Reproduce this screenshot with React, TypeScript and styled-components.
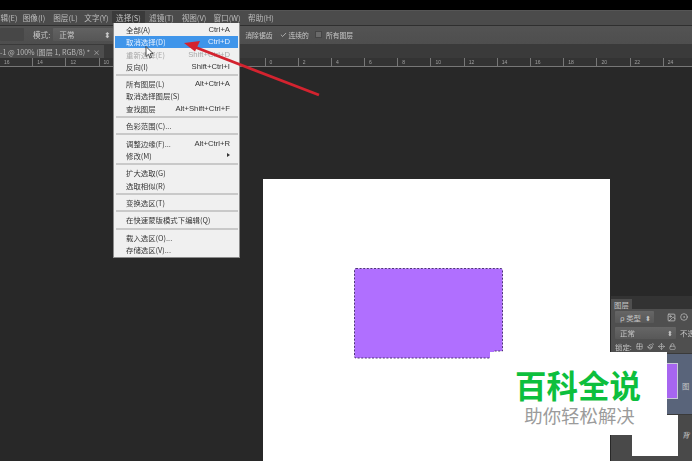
import React from "react";
import styled, { createGlobalStyle } from "styled-components";
import { Check, Grid2x2, Paintbrush, Move, Lock, Image as ImageIcon, CircleDot } from "lucide-react";

const Global = createGlobalStyle`
  html, body { margin: 0; padding: 0; background: #282828; }
  * { box-sizing: border-box; }
`;

const FONT = `"Noto Sans CJK SC", "Liberation Sans", sans-serif`;

const Shell = styled.div`
  position: relative;
  width: 692px;
  height: 461px;
  overflow: hidden;
  background: #282828;
  font-family: ${FONT};
  display: flex;
  flex-direction: column;
`;
const TopBlack = styled.div`height: 10px; background: #000; flex: none;`;
const MenuBar = styled.div`
  height: 16px; flex: none; display: flex; align-items: center; padding-bottom: 2px;
  background: #4b4b4b; border-bottom: 1px solid #2f2f2f; border-top: 1px solid #555;
  font-size: 7.6px; color: #bdbdbd; filter: blur(0.35px); white-space: nowrap;
`;
const MenuTitle = styled.span<{ $w: number; $active?: boolean }>`
  flex: none; width: ${(p) => p.$w}px; height: 100%; display: flex; align-items: center; justify-content: center;
  background: ${(p) => (p.$active ? "#3a3a3a" : "transparent")};
`;
const OptionsBar = styled.div`
  height: 19px; flex: none; display: flex; align-items: center; padding-bottom: 1px;
  background: linear-gradient(#535353, #4e4e4e); border-bottom: 1px solid #3a3a3a;
  font-size: 7.6px; color: #c8c8c8; filter: blur(0.35px); white-space: nowrap;
`;
const OptBox = styled.div<{ $w: number; $light?: boolean }>`
  flex: none; width: ${(p) => p.$w}px; height: 13px; display: flex; align-items: center; justify-content: space-between;
  padding: 0 2px 0 6px; background: ${(p) => (p.$light ? "linear-gradient(#626262,#565656)" : "#474747")};
  border-radius: 1px; margin-left: ${(p) => (p.$light ? 3 : 0)}px;
`;
const OptLabel = styled.span<{ $ml: number; $small?: boolean }>`
  flex: none; margin-left: ${(p) => p.$ml}px; font-size: ${(p) => (p.$small ? 6.8 : 7.6)}px;
`;
const CheckMark = styled.span<{ $ml: number; $on?: boolean }>`
  flex: none; margin-left: ${(p) => p.$ml}px; width: 7px; height: 7px; display: inline-flex; align-items: center; justify-content: center;
  background: ${(p) => (p.$on ? "transparent" : "#6a6a6a")}; border: ${(p) => (p.$on ? "0" : "1px solid #444")}; color: #eee;
`;
const TabBar = styled.div`height: 13px; flex: none; background: #3a3a3a; display: flex; filter: blur(0.35px);`;
const Tab = styled.div`
  width: 104px; height: 100%; background: #4d4d4d; color: #b8b8b8; font-size: 7.1px; white-space: nowrap;
  display: flex; align-items: center; justify-content: space-between; padding: 0 4px 0 0; overflow: hidden;
`;
const Ruler = styled.div`
  height: 9px; flex: none; display: flex; margin-left: -1px; background: #333; 
  box-shadow: inset 0 -1px 0 #777; color: #a0a0a0; font-size: 5px; filter: blur(0.3px);
  font-family: "Liberation Sans", sans-serif;
`;
const RulerCell = styled.div`
  flex: none; width: 33.2px; height: 100%; border-left: 1px solid #777; padding: 1px 0 0 4px; line-height: 7px;
`;
const Workspace = styled.div`
  position: relative; flex: 1; min-height: 0; background: #282828; padding: 112px 0 0 263px; overflow: hidden;
`;
const Doc = styled.div`position: relative; width: 347px; height: 300px; background: #fff;`;
const Selection = styled.svg`position: absolute; left: 90px; top: 88px;`;

const Dropdown = styled.div`
  position: absolute; left: 113px; top: 23px; width: 127px; height: 235px; padding: 0.4px 1px 1px; background: #f0f0f0;
  border: 1px solid #8a8a8a; border-top: 0; color: #333; font-size: 7.4px; filter: blur(0.3px); white-space: nowrap;
  display: flex; flex-direction: column;
`;
const Row = styled.div<{ $hi?: boolean; $off?: boolean }>`
  flex: none; height: 12.25px; display: flex; align-items: center; justify-content: space-between;
  padding: 0 8px 0 11px;
  background: ${(p) => (p.$hi ? "#3f95ea" : "transparent")};
  color: ${(p) => (p.$hi ? "#e6f0ff" : p.$off ? "#a9a9a9" : "#353535")};
`;
const Shortcut = styled.span`font-family: "Liberation Sans", sans-serif; font-size: 7.7px;`;
const Sep = styled.div`flex: none; height: 2px; margin: 1.6px 0 1.6px 1px; background: #c9c9c9;`;
const Caret = styled.span`width: 0; height: 0; border-left: 3px solid #333; border-top: 2px solid transparent; border-bottom: 2px solid transparent;`;

const Overlay = styled.svg`position: absolute; left: 0; top: 0; pointer-events: none;`;

const Panel = styled.div`
  position: absolute; left: 611px; top: 296px; width: 81px; height: 165px; background: #4f4f4f;
  color: #c6c6c6; font-size: 7.4px; white-space: nowrap; display: flex; flex-direction: column;
  filter: blur(0.35px);
`;
const PanelHead = styled.div`flex: none; height: 13px; background: #333; display: flex; align-items: flex-end;`;
const PanelTab = styled.div`height: 10px; width: 21px; background: #4f4f4f; display: flex; align-items: center; justify-content: center;`;
const PanelRow = styled.div<{ $h: number }>`
  flex: none; height: ${(p) => p.$h}px; display: flex; align-items: center; padding-left: 4px; gap: 4px;
`;
const PanelSelect = styled.div<{ $w: number }>`
  flex: none; width: ${(p) => p.$w}px; height: 12px; background: linear-gradient(#666,#585858);
  display: flex; align-items: center; justify-content: space-between; padding: 0 3px 0 5px; border-radius: 1px;
`;
const IconGap = styled.span`flex: none; width: 5px;`;
const LayerRow = styled.div<{ $sel?: boolean }>`
  flex: none; height: ${(p) => (p.$sel ? 61 : 52)}px; display: flex; align-items: flex-start; padding-left: 21px;
  background: ${(p) => (p.$sel ? "#59647a" : "#494949")}; border-top: 1px solid #3a3a3a;
`;
const Thumb = styled.div<{ $purple?: boolean }>`
  flex: none; width: 46px; background: ${(p) => (p.$purple ? "#a766f0" : "#fff")};
  height: ${(p) => (p.$purple ? 36 : 41)}px; margin-top: ${(p) => (p.$purple ? 9 : 0)}px;
  border: ${(p) => (p.$purple ? "1px solid #c9c9d6" : "0")};
`;
const LayerName = styled.span<{ $it?: boolean }>`
  margin: ${(p) => (p.$it ? "14px" : "26px")} 0 0 4px; font-style: ${(p) => (p.$it ? "italic" : "normal")};
`;

const Watermark = styled.div`
  position: absolute; left: 490px; top: 352px; width: 177px; height: 83px; background: #fff;
  display: flex; flex-direction: column; align-items: center; padding-top: 14px;
`;
const WmTitle = styled.div`
  font-size: 31.5px; line-height: 36px; font-weight: 700; color: #0dbf3d; margin-left: -1px;
`;
const WmSub = styled.div`
  font-size: 18.4px; line-height: 24px; color: #9b9b9b; margin-top: 1px; margin-left: 2px;
`;

const rulerVals = [16, 14, 12, 10, 8, 6, 4, 2, 0, 2, 4, 6, 8, 10, 12, 14, 16, 18, 20, 22, 24];

type Item = { t: string; s?: string; hi?: boolean; off?: boolean; sub?: boolean } | "sep";
const items: Item[] = [
  { t: "全部(A)", s: "Ctrl+A" },
  { t: "取消选择(D)", s: "Ctrl+D", hi: true },
  { t: "重新选择(E)", s: "Shift+Ctrl+D", off: true },
  { t: "反向(I)", s: "Shift+Ctrl+I" },
  "sep",
  { t: "所有图层(L)", s: "Alt+Ctrl+A" },
  { t: "取消选择图层(S)" },
  { t: "查找图层", s: "Alt+Shift+Ctrl+F" },
  "sep",
  { t: "色彩范围(C)..." },
  "sep",
  { t: "调整边缘(F)...", s: "Alt+Ctrl+R" },
  { t: "修改(M)", sub: true },
  "sep",
  { t: "扩大选取(G)" },
  { t: "选取相似(R)" },
  "sep",
  { t: "变换选区(T)" },
  "sep",
  { t: "在快速蒙版模式下编辑(Q)" },
  "sep",
  { t: "载入选区(O)..." },
  { t: "存储选区(V)..." },
];

const menus: [string, number, boolean?][] = [
  ["辑(E)", 18],
  ["图像(I)", 32],
  ["图层(L)", 31],
  ["文字(Y)", 31],
  ["选择(S)", 33, true],
  ["滤镜(T)", 33],
  ["视图(V)", 32],
  ["窗口(W)", 34],
  ["帮助(H)", 34],
];

export default function App() {
  return (
    <Shell>
      <Global />
      <TopBlack />
      <MenuBar>
        {menus.map(([t, w, a]) => (
          <MenuTitle key={t} $w={w} $active={a}>{t}</MenuTitle>
        ))}
      </MenuBar>
      <OptionsBar>
        <OptBox $w={24} />
        <OptLabel $ml={9}>模式:</OptLabel>
        <OptBox $w={60} $light>
          <span>正常</span><span>⬍</span>
        </OptBox>
        <OptLabel $ml={132} $small>消除锯齿</OptLabel>
        <CheckMark $ml={7} $on><Check size={8} strokeWidth={2} /></CheckMark>
        <OptLabel $ml={2} $small>连续的</OptLabel>
        <CheckMark $ml={6} />
        <OptLabel $ml={4} $small>所有图层</OptLabel>
      </OptionsBar>
      <TabBar>
        <Tab><span>-1 @ 100% (图层 1, RGB/8) *</span><span>×</span></Tab>
      </TabBar>
      <Ruler>
        {rulerVals.map((v, i) => (
          <RulerCell key={i}>{v}</RulerCell>
        ))}
      </Ruler>
      <Workspace>
        <Doc>
          <Selection width="152" height="94" viewBox="0 0 152 94">
            <path
              d="M3 1.5 H148 Q149.5 1.5 149.5 3 V84 H141 V91 H3 Q1.5 91 1.5 89.5 V3 Q1.5 1.5 3 1.5 Z"
              fill="#b06fff"
              stroke="#4f3577"
              strokeWidth="1"
              strokeDasharray="2 1.6"
            />
          </Selection>
        </Doc>
      </Workspace>

      <Panel>
        <PanelHead><PanelTab>图层</PanelTab></PanelHead>
        <PanelRow $h={16}>
          <PanelSelect $w={39}><span>ρ 类型</span><span>⬍</span></PanelSelect>
          <IconGap />
          <ImageIcon size={9} />
          <CircleDot size={8} />
        </PanelRow>
        <PanelRow $h={15}>
          <PanelSelect $w={61}><span>正常</span><span>⬍</span></PanelSelect>
          <span>不透</span>
        </PanelRow>
        <PanelRow $h={13}>
          <span>锁定:</span>
          <Grid2x2 size={7} />
          <Paintbrush size={7} />
          <Move size={7} />
          <Lock size={7} />
        </PanelRow>
        <LayerRow $sel>
          <Thumb $purple />
          <LayerName>图</LayerName>
        </LayerRow>
        <LayerRow>
          <Thumb />
          <LayerName $it>背</LayerName>
        </LayerRow>
      </Panel>

      <Watermark>
        <WmTitle>百科全说</WmTitle>
        <WmSub>助你轻松解决</WmSub>
      </Watermark>

      <Dropdown>
        {items.map((it, i) =>
          it === "sep" ? (
            <Sep key={i} />
          ) : (
            <Row key={i} $hi={it.hi} $off={it.off}>
              <span>{it.t}</span>
              {it.s && <Shortcut>{it.s}</Shortcut>}
              {it.sub && <Caret />}
            </Row>
          )
        )}
      </Dropdown>

      <Overlay width="692" height="461" viewBox="0 0 692 461">
        <path d="M146 46.5 L146 56.5 L148.4 54.3 L150 58 L151.6 57.3 L150 53.8 L153 53.5 Z" fill="#fff" stroke="#222" strokeWidth="0.8" />
        <path d="M319 95 L196 47.5" stroke="#d3232f" strokeWidth="2.8" fill="none" />
        <path d="M184 43 L200 41 L195 51.5 Z" fill="#d3232f" />
      </Overlay>
    </Shell>
  );
}
